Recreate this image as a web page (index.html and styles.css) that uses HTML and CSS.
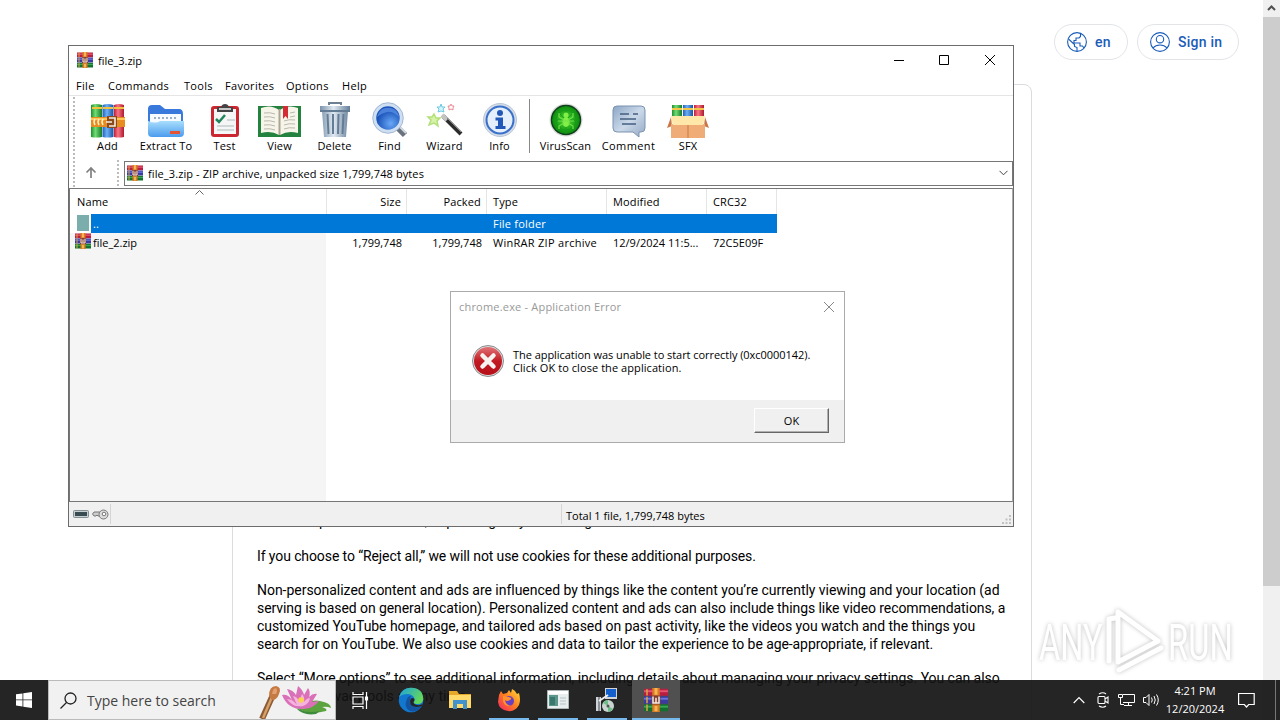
FILE: index.html
```html
<!DOCTYPE html>
<html lang="en">
<head>
    <meta charset="UTF-8">
    <meta name="viewport" content="width=device-width, initial-scale=1.0">
    <title>Desktop</title>
    <link rel="stylesheet" href="styles.css">
</head>
<body>
    <svg class="defs" width="0" height="0">
        <defs>
            <linearGradient id="gFolder" x1="0" y1="0" x2="0" y2="1"><stop offset="0" stop-color="#a9defc"/><stop offset="1" stop-color="#4a9bee"/></linearGradient>
            <linearGradient id="gSteel" x1="0" y1="0" x2="1" y2="0"><stop offset="0" stop-color="#7b94ab"/><stop offset=".45" stop-color="#dfe9f2"/><stop offset="1" stop-color="#647e98"/></linearGradient>
            <linearGradient id="gBubble" x1="0" y1="0" x2="1" y2="1"><stop offset="0" stop-color="#8ca6c5"/><stop offset=".5" stop-color="#cbd9ea"/><stop offset="1" stop-color="#93a9c4"/></linearGradient>
            <linearGradient id="gGreen" x1="0" y1="0" x2="1" y2="0"><stop offset="0" stop-color="#1d8f2d"/><stop offset=".4" stop-color="#72dc74"/><stop offset="1" stop-color="#157a27"/></linearGradient>
            <linearGradient id="gBlue" x1="0" y1="0" x2="1" y2="0"><stop offset="0" stop-color="#1f5fb8"/><stop offset=".4" stop-color="#6db0f5"/><stop offset="1" stop-color="#1a51a3"/></linearGradient>
            <linearGradient id="gRed" x1="0" y1="0" x2="1" y2="0"><stop offset="0" stop-color="#c11d38"/><stop offset=".4" stop-color="#f77683"/><stop offset="1" stop-color="#b01830"/></linearGradient>
            <radialGradient id="gLens" cx=".6" cy=".7"><stop offset="0" stop-color="#69a8f8"/><stop offset="1" stop-color="#1b53b8"/></radialGradient>
            <radialGradient id="gVirus"><stop offset="0" stop-color="#52dd35"/><stop offset="1" stop-color="#08880c"/></radialGradient>
            <linearGradient id="gError" x1="0" y1="0" x2="0" y2="1"><stop offset="0" stop-color="#e27478"/><stop offset=".5" stop-color="#c21a22"/><stop offset="1" stop-color="#b70f18"/></linearGradient>
            <linearGradient id="gEdge" x1="0" y1="0" x2="1" y2=".5"><stop offset="0" stop-color="#1ba0e2"/><stop offset="1" stop-color="#63d85b"/></linearGradient>
            <linearGradient id="gFox" x1="1" y1="0" x2="0" y2="1"><stop offset="0" stop-color="#ffe13a"/><stop offset=".5" stop-color="#ff7a20"/><stop offset="1" stop-color="#f0206a"/></linearGradient>
        </defs>
        <symbol id="rar" viewBox="0 0 16 16">
            <path fill="#b81d42" d="M0 .5h16v4.700H0z"/><path fill="#e4556f" d="M0 1.500h16v1.300H0z"/>
            <path fill="#3a3aa0" d="M0 5.500h16v5H0z"/><path fill="#6a74dc" d="M0 6.500h16v1.300H0z"/>
            <path fill="#12702f" d="M0 10.800h16v4.700H0z"/><path fill="#3aa653" d="M0 11.800h16v1.300H0z"/>
            <path fill="#d9a545" d="M1.500 .8h1v4.200h-1zM1.500 5.800h1v4.400h-1zM1.500 11h1v4.300h-1z"/>
            <path fill="#d97a26" d="M5.500 0h5v16h-5z"/><path fill="#f5b552" d="M7 0h2v4.500H7zM7 12h2v3.500H7z"/>
            <path fill="#833c2c" d="M5 5h6v6H5z"/>
            <path fill="none" stroke="#f4ece6" d="M6 5.700v4.300h4V5.700M8 6.500v3"/>
        </symbol>
    </svg>

    <main class="page">
        <header class="page-header">
            <a class="pill pill-lang">
                <svg width="20" height="20" viewBox="0 0 20 20" fill="none" stroke="currentColor" stroke-width="1.1"><circle cx="10" cy="10" r="9.4"/><path d="M1.500 7l6 5.500v2l2.500 1v4M13.500 1.500v3l-1.500 1.500H9v2.500H7V11h6v3h2.500l1.500 2"/></svg>
                <span>en</span>
            </a>
            <a class="pill pill-sign">
                <svg width="20" height="20" viewBox="0 0 20 20" fill="none" stroke="currentColor" stroke-width="1.1"><circle cx="10" cy="10" r="9.4"/><circle cx="10" cy="7.200" r="3.700"/><path d="M3 16c3.500-4 10.500-4 14 0"/></svg>
                <span>Sign in</span>
            </a>
        </header>
        <section class="consent">
            <ul><li>Show personalized ads, depending on your settings</li></ul>
            <p class="t2">If you choose to “Reject all,” we will not use cookies for these additional purposes.</p>
            <p><span class="t3">Non-personalized content and ads are influenced by things like the content you’re currently viewing and your location (ad</span><br>
            <span class="t4">serving is based on general location). Personalized content and ads can also include things like video recommendations, a</span><br>
            <span class="t5">customized YouTube homepage, and tailored ads based on past activity, like the videos you watch and the things you</span><br>
            <span class="t6">search for on YouTube. We also use cookies and data to tailor the experience to be age-appropriate, if relevant.</span></p>
            <p><span class="t7">Select “More options” to see additional information, including details about managing your privacy settings. You can also</span><br>
            visit g.co/privacytools at any time.</p>
        </section>
    </main>

    <div class="scrollbar">
        <svg class="scroll-up" width="17" height="17" viewBox="0 0 17 17"><path d="M5 10l3.500-3.500 3.500 3.500" fill="none" stroke="#505050" stroke-width="2"/></svg>
        <div class="thumb"></div>
    </div>

    <svg class="watermark" width="204" height="72" viewBox="0 0 204 72">
        <g fill="#fff" font-family="Roboto" font-size="50">
            <text transform="translate(4 54) scale(.65 1)">ANY</text>
            <text transform="translate(133 54) scale(.655 1)">RUN</text>
        </g>
        <path d="M74 55V13l6-1M83 6v50l40-21zM84 64l42-22" fill="none" stroke="#fff" stroke-width="5" stroke-linejoin="round" stroke-linecap="round"/>
    </svg>

    <div class="window">
        <div class="title-bar">
            <svg width="16" height="16"><use href="#rar"/></svg>
            <span class="title">file_3.zip</span>
            <div class="controls">
                <svg width="46" height="30" viewBox="0 0 46 30"><path d="M18 14.500h10" stroke="#000"/></svg>
                <svg width="46" height="30" viewBox="0 0 46 30"><path d="M17.500 9.500h9v9h-9z" fill="none" stroke="#000"/></svg>
                <svg width="45" height="30" viewBox="0 0 45 30"><path d="M17 9l10 10M27 9L17 19" stroke="#000"/></svg>
            </div>
        </div>
        <nav class="menu">
            <span class="m-file">File</span><span class="m-commands">Commands</span><span class="m-tools">Tools</span><span class="m-favorites">Favorites</span><span class="m-options">Options</span><span>Help</span>
        </nav>
        <div class="bars">
            <div class="grip"></div>
            <div class="bars-body">
                <div class="toolbar">
                    <div class="tool tool-add">
                        <svg width="34" height="34" viewBox="0 0 34 34"><path fill="url(#gGreen)" d="M0 1q5-2 11 0v32q-6 1-11 0z"/><path fill="url(#gBlue)" d="M11.500 1q5-2 11 0v32q-6 1-11 0z"/><path fill="url(#gRed)" d="M23 1q5-2 10 0v32q-5 1-10 0z"/><path fill="#f3c23f" d="M1 3h10v2H1zM12 3h10v2H12zM23 3h10v2H23z"/><path fill="#e78c20" d="M0 13h34v10H0z"/><path fill="#ffc758" d="M0 14h34v2H0z"/><path d="M4 15q-2 3 0 6M8 15q-2 3 0 6M12 15q-2 3 0 6" stroke="#fff0c5" stroke-width="1.500" fill="none"/><path fill="#8d4b1c" d="M16 12h10v12H16z"/><path fill="none" stroke="#f6ede2" stroke-width="1.600" d="M18 14h6v8h-6M15 18h6"/></svg>
                        <span>Add</span>
                    </div>
                    <div class="tool tool-wide">
                        <svg width="38" height="34" viewBox="0 0 38 34"><path fill="#3979dc" d="M1 5q0-4 4-4h8l5 4h14q4 0 4 5v18H1z"/><path fill="#f7faff" d="M3 10h31v12H3z"/><path d="M7 14h24" stroke="#9cafc7" stroke-width="2" stroke-dasharray="2 2"/><path fill="url(#gFolder)" d="M1 17q8 3 12 0h24v12q0 4-4 4H5q-4 0-4-4z"/><path fill="#e55234" d="M23 27h10v3H23z"/></svg>
                        <span>Extract To</span>
                    </div>
                    <div class="tool">
                        <svg width="30" height="34" viewBox="0 0 30 34"><rect x="1" y="2" width="28" height="31" rx="3" fill="#cc2630"/><path fill="#f6f6f6" d="M4 5h22v25H4z"/><path fill="#444" d="M7 3h4q1-3 4-3t4 3h4v5H7z"/><path fill="#c7c7c7" d="M9 4h12v2H9z"/><path d="M6 15l3 3 6-7" fill="none" stroke="#20865b" stroke-width="2.500"/><path d="M17 16h8M7 22h17M7 26h17" stroke="#abb"/></svg>
                        <span>Test</span>
                    </div>
                    <div class="tool">
                        <svg width="43" height="34" viewBox="0 0 43 34"><path fill="#23823e" d="M0 2h43v31H0z"/><path fill="#f7f4e9" d="M3 4q10-4 18 2v25q-8-5-18-2zM40 4q-10-4-18 2v25q8-5 18-2z"/><path d="M21.500 5v26" stroke="#aaa58f" stroke-width="2"/><path d="M6 9q6-1 11 1M6 13q6-1 11 1M6 17q6-1 11 1M6 21q6-1 11 1M6 25q6-1 11 1M26 17q5-2 11-1M26 21q5-2 11-1M26 25q5-2 11-1M32 9l5-1M32 13l5-1" fill="none" stroke="#b8b9ad"/><path fill="#d42c35" d="M25 2h5v13l-2.500-3-2.500 3z"/></svg>
                        <span>View</span>
                    </div>
                    <div class="tool">
                        <svg width="34" height="36" viewBox="0 0 34 36"><path fill="none" stroke="#6d8193" stroke-width="2" d="M11 3V1h12v2"/><path fill="url(#gSteel)" d="M2 4h30v5H2zM4 9h26l-2 26H6z"/><path d="M2 9h30M9.500 12l1 20M15 12v20M20.500 12l-.5 20M25.500 12l-1 20" stroke="#647d95" stroke-width="2"/></svg>
                        <span>Delete</span>
                    </div>
                    <div class="tool">
                        <svg width="38" height="36" viewBox="0 0 38 36"><path d="M25 24l9 9" stroke="#69727d" stroke-width="6"/><path d="M27 23l8 8" stroke="#d5dbe2" stroke-width="2"/><circle cx="17" cy="16" r="13.500" fill="url(#gLens)" stroke="#cfdff2" stroke-width="3.500"/><circle cx="17" cy="16" r="15.300" fill="none" stroke="#8ba0c4" stroke-width=".7"/><path fill="#5f95ea" opacity=".7" d="M6 15Q9 4 20 6q7 2 8 9-6-6-12-5-5 1-10 5z"/></svg>
                        <span>Find</span>
                    </div>
                    <div class="tool">
                        <svg width="38" height="36" viewBox="0 0 38 36"><path d="M17 14l18 18" stroke="#2c2c2c" stroke-width="4"/><path d="M16 13l5 5" stroke="#c4c4c4" stroke-width="4"/><path d="M21 16l14 14" stroke="#888"/><path fill="#d7f2aa" stroke="#b4e07a" stroke-width="1.500" d="M8 12l2 4 4 0-3 3 1 5-4-3-5 2 2-5-3-3 4 0z"/><path fill="#d6f3fa" stroke="#6dcbe5" d="M15 2l1 3 3 0-2 2 1 3-3-1-3 1 1-3-2-2 3 0z"/><path fill="#fff" stroke="#ee8a94" d="M25 2l1 2 2 0-1 2 0 2-2-1-2 1 0-2-1-2 2 0z"/></svg>
                        <span>Wizard</span>
                    </div>
                    <div class="tool">
                        <svg width="36" height="36" viewBox="0 0 36 36"><circle cx="18" cy="18" r="16.500" fill="#d4dce7" stroke="#bac7d9"/><circle cx="18" cy="18" r="13.500" fill="#e5effc" stroke="#3970c9" stroke-width="2"/><circle cx="18" cy="11" r="3" fill="#2157b8"/><path fill="#2157b8" d="M13.500 15.500H21V24h2.500v3h-10v-3H16v-5.500h-2.500z"/></svg>
                        <span>Info</span>
                    </div>
                    <div class="tool-sep"></div>
                    <div class="tool tool-virus">
                        <svg width="36" height="36" viewBox="0 0 36 36"><circle cx="18" cy="18" r="16.500" fill="#d7dcd5"/><circle cx="18" cy="18" r="14.500" fill="url(#gVirus)" stroke="#123e20" stroke-width="1.500"/><path d="M4 18h28M18 4v28M8 8l20 20M28 8L8 28" stroke="#159b18" stroke-width=".8"/><circle cx="18" cy="18" r="10" fill="none" stroke="#159b18"/><ellipse cx="18" cy="20" rx="3.500" ry="5" fill="#82ef48"/><circle cx="18" cy="13" r="2.500" fill="#82ef48"/><path d="M11 11v4l5 3M25 11v4l-5 3M10 19h16M11 27v-3l5-3M25 27v-3l-5-3" fill="none" stroke="#73e048" stroke-width="1.200"/></svg>
                        <span>VirusScan</span>
                    </div>
                    <div class="tool tool-wide tool-comment">
                        <svg width="34" height="34" viewBox="0 0 34 34"><path fill="url(#gBubble)" stroke="#7c93b1" d="M5 2h24q4 0 4 4v18q0 4-4 4h-2v5l-6-5H5q-4 0-4-4V6q0-4 4-4z"/><path d="M8 10h9M21 10h5M8 15h16M10 20h14" stroke="#445e80" stroke-width="1.700"/></svg>
                        <span>Comment</span>
                    </div>
                    <div class="tool tool-sfx">
                        <svg width="42" height="34" viewBox="0 0 42 34"><path fill="url(#gGreen)" d="M5 1h10v14H5z"/><path fill="url(#gBlue)" d="M16 1h10v14H16z"/><path fill="url(#gRed)" d="M27 1h10v14H27z"/><path fill="#f3c548" d="M5 4h10v2H5zM16 4h10v2H16zM27 4h10v2H27z"/><path fill="#c87848" d="M4 13L0 24l5-2zM38 13l4 11-5-2z"/><path fill="#f0ac77" d="M4 20h34v14H4z"/><path fill="#ffe6a9" d="M4 12h34l-2 9H6z"/><path d="M21 21v13" stroke="#c57b46"/></svg>
                        <span>SFX</span>
                    </div>
                </div>
                <div class="address">
                    <svg class="up" width="12" height="13" viewBox="0 0 12 13"><path d="M6 12V2M1.500 6.500L6 2l4.500 4.500" fill="none" stroke="#808080" stroke-width="1.700"/></svg>
                    <div class="grip grip-small"></div>
                    <div class="combo">
                        <svg width="16" height="16"><use href="#rar"/></svg>
                        <span>file_3.zip - ZIP archive, unpacked size 1,799,748 bytes</span>
                        <svg class="drop" width="9" height="6" viewBox="0 0 9 6"><path d="M.5 .8l4 4 4-4" fill="none" stroke="#444"/></svg>
                    </div>
                </div>
            </div>
        </div>
        <div class="list">
            <svg class="sort" width="9" height="5" viewBox="0 0 9 5"><path d="M.5 4.500l4-4 4 4" fill="none" stroke="#666"/></svg>
            <div class="row head">
                <span>Name</span><span class="num">Size</span><span class="num">Packed</span><span>Type</span><span>Modified</span><span>CRC32</span>
            </div>
            <div class="row selected">
                <span class="name"><i class="folder"></i><b>..</b></span><span></span><span></span><span>File folder</span><span></span><span></span>
            </div>
            <div class="row">
                <span class="name"><svg width="16" height="16"><use href="#rar"/></svg>file_2.zip</span><span class="num">1,799,748</span><span class="num">1,799,748</span><span class="type">WinRAR ZIP archive</span><span>12/9/2024 11:5...</span><span class="crc">72C5E09F</span>
            </div>
            <div class="shade"></div>
        </div>
        <footer class="status">
            <div class="status-icons">
                <svg width="16" height="8" viewBox="0 0 16 8"><rect x=".5" y=".5" width="15" height="7" rx="1" fill="#c5ced0" stroke="#858e91"/><path fill="#374b50" d="M2 2h12v4H2z"/></svg>
                <svg width="17" height="11" viewBox="0 0 17 11"><path fill="#ccc" stroke="#777" d="M9 3H2L.5 5 2 7h2l1-1 1 1h3z"/><circle cx="11.500" cy="5.500" r="4.500" fill="#ddd" stroke="#777"/><circle cx="12" cy="5" r="1.800" fill="#fff" stroke="#777"/></svg>
            </div>
            <div class="status-space"></div>
            <span class="total">Total 1 file, 1,799,748 bytes</span>
            <svg class="resize" width="10" height="10" viewBox="0 0 10 10"><path fill="#c0c0c0" d="M7 0h2v2H7zM7 3.500h2v2H7zM7 7h2v2H7zM3.500 3.500h2v2h-2zM3.500 7h2v2h-2zM0 7h2v2H0z"/></svg>
        </footer>
    </div>

    <div class="dialog">
        <div class="dialog-title">
            <span>chrome.exe - Application Error</span>
            <svg width="12" height="12" viewBox="0 0 12 12"><path d="M1 1l10 10M11 1L1 11" stroke="#888"/></svg>
        </div>
        <div class="dialog-body">
            <svg width="32" height="32" viewBox="0 0 32 32"><circle cx="16" cy="16" r="15.500" fill="#ddd" stroke="#8c8c8c"/><circle cx="16" cy="16" r="14" fill="url(#gError)"/><path d="M10.500 10.500l11 11M21.500 10.500l-11 11" stroke="#f6f2f0" stroke-width="4.500" stroke-linecap="round"/></svg>
            <p><span class="error-line">The application was unable to start correctly (0xc0000142).</span><br><span class="error-hint">Click OK to close the application.</span></p>
        </div>
        <div class="dialog-footer"><button>OK</button></div>
    </div>

    <footer class="taskbar">
        <div class="start">
            <svg width="16" height="16" viewBox="0 0 16 16" fill="#fff"><path d="M0 2.300l6.500-.9v6.100H0zM7.300 1.300L16 0v7.500H7.300zM0 8.300h6.500v6.200L0 13.600zM7.300 8.300H16V16l-8.700-1.300z"/></svg>
        </div>
        <div class="search">
            <svg width="17" height="17" viewBox="0 0 17 17" fill="none" stroke="#222" stroke-width="1.300"><circle cx="10.500" cy="6.500" r="5.500"/><path d="M6.500 10.500L.5 16.500"/></svg>
            <span>Type here to search</span>
            <svg class="lotus" width="74" height="34" viewBox="0 0 74 34"><path d="M4 34L14 12" stroke="#8b5a35" stroke-width="6"/><path d="M5 33L14 12" stroke="#d6a066" stroke-width="2.500"/><path fill="#c67a43" d="M11 11q0-10 7-10 6 1 3 8-2 6-7 6z"/><path fill="#e3a070" d="M14 9q1-6 4-6 2 2 0 6z"/><path fill="#5ba33f" d="M38 22q14-8 24-6 11 2 11 7-4-2-9-1 6 2 4 4-14 4-26-1z"/><path fill="#3f8b3c" d="M38 23q12 6 24 3l-4 3q-13 2-20-6z"/><path fill="#d970b8" d="M24 10q6-1 10 5l-5-11q6 1 9 6l2-9q5 4 6 9l4-7q3 4 1 9 4-4 8-3l-5 8q5-1 7-1-5 7-15 8-16 1-22-14z"/><path fill="#f5b3dd" d="M29 14q6 0 10 6l-4-9q5 1 6 6l3-8q3 3 2 8 3-4 6-4-1 6-7 8-10 2-16-7z"/><circle cx="43" cy="15" r="2.800" fill="#f8d54c"/></svg>
        </div>
        <div class="task task-view">
            <svg width="17" height="17" viewBox="0 0 17 17" fill="none" stroke="#fff" stroke-width="1.200"><path d="M1 0v2.500h10V0M1 17v-2.500h10V17M1 5h10v7H1zM14.500 0v17"/><path fill="#fff" d="M13.500 5h2v3h-2z"/></svg>
        </div>
        <div class="task">
            <svg width="26" height="26" viewBox="0 0 26 26"><circle cx="13" cy="13" r="12.300" fill="#1277cf"/><path fill="url(#gEdge)" d="M1 10Q4 .7 13 .7 25 1 25.300 12q-.5 5-5.500 5-4 0-4.500-2 2-1 1-4-2-4-7-4T1 10z"/><path fill="#1353a0" d="M9 12q1-3 4-3-4 9 4 11 4 1 7-1-5 7-12 5Q5 20 9 12z"/><path fill="#242424" d="M14 11q3 0 2.300 2.500-2 2.500 1 4Q21 19 24.700 17l-1 2.300Q12 22 12 14q.5-3 2-3z"/></svg>
        </div>
        <div class="task">
            <svg width="22" height="20" viewBox="0 0 22 20"><path fill="#e5a829" d="M0 1h8l2 3h12v14H0z"/><path fill="#ffda6b" d="M0 5h22v13H0z"/><path fill="#4292ce" d="M4 10h14v9h-4v-5H8v5H4z"/></svg>
        </div>
        <div class="task open">
            <svg width="24" height="24" viewBox="0 0 24 24"><path fill="url(#gFox)" d="M2 7l2-4 2 3 4-1 2-3 2 3 1-4q3 1 5 5l2-1q2 7 0 12-4 7-11 6Q2 22 1 14z"/><circle cx="12" cy="13" r="5" fill="#6841c0"/><path fill="#ff922d" d="M6 8l6 1q4 1 1 3-3 2-5 0 1 6 6 5-6 3-8-4z"/></svg>
        </div>
        <div class="task open">
            <svg width="22" height="20" viewBox="0 0 22 20"><path fill="#e8eeee" stroke="#afb8b8" d="M.5 .5h21v18H.5z"/><path fill="#fff" d="M1 1h20v3H1z"/><path fill="#5c958c" d="M2 5h9v11H2z"/><path fill="#38786d" d="M3 7h5v8H3z"/><path d="M13 8h6M13 11h6M13 14h6" stroke="#b6c3c3"/></svg>
        </div>
        <div class="task open">
            <svg width="24" height="24" viewBox="0 0 24 24"><path fill="#d2d5d8" d="M1 9h5v14H1z"/><path fill="#8a9098" d="M3 9h2v14H3z"/><path fill="#d2d5d8" d="M10 0h12v11H10z"/><path fill="#155fcb" d="M11 1h10v8H11z"/><path d="M4 13l9-6" stroke="#eee" stroke-width="2"/><circle cx="13" cy="18" r="6" fill="#c9d6cf"/><path fill="#6fbd8a" d="M13 18l-5-3q2-3 5-3zM13 18l5 3q-2 3-5 3z"/><circle cx="13" cy="18" r="1.500" fill="#555"/></svg>
        </div>
        <div class="task active">
            <svg width="24" height="24"><use href="#rar"/></svg>
        </div>
        <div class="tray">
            <svg width="12" height="8" viewBox="0 0 12 8"><path d="M.7 7L6 1.500 11.300 7" fill="none" stroke="#fff" stroke-width="1.200"/></svg>
            <svg class="meet" width="12" height="16" viewBox="0 0 12 16" fill="none" stroke="#fff" stroke-width="1.100"><rect x="1" y="4.500" width="7" height="7" rx="1"/><path d="M8 7l3-2v6L8 9M2 2q4-2.500 7 0M2 14q4 2.500 7 0"/></svg>
            <svg class="network" width="17" height="14" viewBox="0 0 17 14" fill="none" stroke="#fff"><path d="M5 1.500h11.500v8H5M10.500 9.500v3M6 12.500h8M.5 1.500h4v3h-4zM2.500 4.500v7h3.500"/></svg>
            <svg class="volume" width="17" height="14" viewBox="0 0 17 14" fill="none" stroke="#fff"><path d="M.5 4.500h2.500L6 1.500v11L3 9.500H.5zM8.500 4.500q1.500 2.500 0 5M11 3q2.500 4 0 8M13.500 1.500q3.500 5.500 0 11"/></svg>
            <div class="clock"><span class="time">4:21 PM</span><span>12/20/2024</span></div>
            <svg width="17" height="16" viewBox="0 0 17 16" fill="none" stroke="#fff" stroke-width="1.200"><path d="M.6 1.500h15.600v11h-5.500L8.500 15l-2.200-2.500H.6z"/></svg>
        </div>
        <div class="peek"></div>
    </footer>
</body>
</html>
```
FILE: styles.css
```css
* {
    box-sizing: border-box;
}

body {
    margin: 0;
    width: 1280px;
    height: 720px;
    overflow: hidden;
    position: relative;
    display: flex;
    background-color: white;
    font-family: "Open Sans", "Noto Sans", sans-serif;
    font-size: 11px;
    color: #000;
}

svg {
    display: block;
    flex: none;
}

p {
    margin: 0;
}

.defs {
    position: absolute;
}

/* web page behind the windows */
.page {
    width: 1263px;
    height: 720px;
    overflow: hidden;
    font-family: Roboto, sans-serif;
}

.page-header {
    height: 84px;
    padding: 24px 24px 0 0;
    display: flex;
    justify-content: flex-end;
    gap: 9px;
}

.pill {
    height: 36px;
    border: 1px solid #e2e4e8;
    border-radius: 18px;
    display: flex;
    align-items: center;
    padding-left: 12px;
    gap: 8px;
    color: #1a5cb8;
    font-size: 14px;
    font-weight: 500;
    letter-spacing: 0.25px;
}

.pill-lang {
    width: 74px;
}

.pill-sign {
    width: 102px;
}

.consent {
    width: 800px;
    height: 700px;
    margin-left: 232px;
    border: 1px solid #dadce0;
    border-radius: 8px;
    padding: 427px 24px 0;
    font-size: 14px;
    line-height: 18px;
    color: #000;
    white-space: nowrap;
}

.consent ul {
    margin: 0 0 17px;
    padding-left: 24px;
}

.consent p {
    margin-bottom: 16px;
}

.t2 {
    letter-spacing: -0.1px;
}

.t3 {
    letter-spacing: -0.03px;
}

.t4 {
    letter-spacing: -0.08px;
}

.t5 {
    letter-spacing: -0.05px;
}

.t6 {
    letter-spacing: -0.08px;
}

.t7 {
    letter-spacing: -0.04px;
}

.scrollbar {
    width: 17px;
    height: 720px;
    background-color: #f0f0f0;
}

.thumb {
    height: 569px;
    background-color: #cdcdcd;
}

.watermark {
    position: absolute;
    left: 1035px;
    top: 606px;
    filter: drop-shadow(0 0 2px rgba(0, 0, 0, 0.25));
}

/* archive window */
.window {
    position: absolute;
    left: 68px;
    top: 45px;
    width: 946px;
    height: 482px;
    border: 1px solid #6c6c6c;
    background-color: white;
    display: flex;
    flex-direction: column;
    white-space: nowrap;
}

.title-bar {
    height: 30px;
    display: flex;
    align-items: center;
    padding-left: 8px;
    gap: 5px;
}

.title-bar > svg,
.title {
    margin-bottom: 2px;
}

.controls {
    margin-left: auto;
    display: flex;
}

.menu {
    height: 20px;
    display: flex;
    align-items: center;
    padding-left: 7px;
    border-bottom: 1px solid #e5e5e5;
    letter-spacing: 0.3px;
}

.m-file {
    width: 32px;
}

.m-commands {
    width: 76px;
}

.m-tools {
    width: 41px;
}

.m-favorites {
    width: 61px;
}

.m-options {
    width: 56px;
}

.bars {
    height: 92px;
    display: flex;
    padding: 1px 0 0 4px;
}

.grip {
    width: 2px;
    background: repeating-linear-gradient(#bbb 0 2px, #fff 2px 4px);
}

.bars-body {
    flex: 1;
}

.toolbar {
    height: 63px;
    display: flex;
    padding-left: 5px;
}

.tool {
    width: 55px;
    height: 57px;
    display: flex;
    flex-direction: column;
    align-items: center;
    justify-content: flex-end;
}

.tool svg {
    margin-bottom: 0;
}

.tool span {
    line-height: 16px;
    letter-spacing: 0.15px;
}

.tool-add {
    width: 55px;
}

.tool-wide {
    width: 62px;
}

.tool-comment {
    width: 61px;
}

.tool-comment span {
    letter-spacing: 0.4px;
}

.tool-virus {
    width: 65px;
}

.tool-sfx {
    width: 58px;
}

.tool-sep {
    width: 1px;
    height: 54px;
    margin: 2px 3px 0 2px;
    background-color: #888;
}

.address {
    height: 26px;
    display: flex;
    align-items: center;
}

.up {
    margin-left: 10px;
    margin-bottom: 2px;
}

.grip-small {
    height: 26px;
    margin-left: 20px;
}

.combo {
    width: 889px;
    height: 25px;
    margin-left: 5px;
    border: 1px solid #777;
    display: flex;
    align-items: center;
    padding: 0 4px 0 2px;
    gap: 5px;
    letter-spacing: 0.1px;
}

.drop {
    margin-left: auto;
}

.list {
    position: relative;
    height: 314px;
    border: 1px solid #777;
    border-right-color: #aaa;
    display: flex;
    flex-direction: column;
}

.sort {
    position: absolute;
    left: 125px;
    top: 1px;
}

.row {
    width: 707px;
    height: 19px;
    display: grid;
    grid-template-columns: 257px 80px 80px 120px 100px 70px;
    align-items: center;
    line-height: 19px;
}

.row > span {
    padding-left: 6px;
}

.row > .num {
    padding: 0 5px 0 0;
    text-align: right;
}

.row > .name {
    display: flex;
    padding-left: 5px;
    gap: 2px;
}

.row > .type {
    letter-spacing: 0.28px;
}

.head {
    height: 25px;
    line-height: 25px;
    letter-spacing: 0.15px;
}

.head > span {
    height: 25px;
    border-right: 1px solid #e5e5e5;
}

.head > span:first-child {
    padding-left: 7px;
}

.selected {
    background: linear-gradient(#0078d7, #0078d7) 21px 0 no-repeat;
    color: white;
    letter-spacing: 0.2px;
}

.selected b {
    font-weight: normal;
}

.folder {
    width: 12px;
    height: 16px;
    margin: 1px 2px 0;
    background-color: #7aadac;
}

.shade {
    width: 256px;
    flex: 1;
    background-color: #f5f5f5;
}

.row:not(.head):not(.selected) > .name {
    background-color: #f5f5f5;
    margin-right: 1px;
}

.status {
    flex: 1;
    display: flex;
    align-items: center;
    background-color: #f0f0f0;
    position: relative;
}

.total {
    padding-top: 2px;
}

.status-icons {
    width: 42px;
    height: 20px;
    padding-left: 4px;
    display: flex;
    align-items: center;
    gap: 3px;
    border-right: 1px solid #d5d5d5;
}

.status-space {
    width: 451px;
    height: 20px;
    margin-right: 4px;
    border-right: 1px solid #d5d5d5;
}

.resize {
    position: absolute;
    right: 1px;
    bottom: 1px;
}

/* error message */
.dialog {
    position: absolute;
    left: 450px;
    top: 291px;
    width: 395px;
    height: 152px;
    border: 1px solid #aaa;
    background-color: white;
    white-space: nowrap;
}

.dialog-title {
    height: 29px;
    padding: 0 9px 0 8px;
    display: flex;
    align-items: center;
    justify-content: space-between;
    color: #999;
    letter-spacing: 0.2px;
}

.dialog-body {
    height: 79px;
    padding: 24px 0 0 21px;
    display: flex;
    gap: 9px;
}

.dialog-body p {
    line-height: 13px;
    padding-top: 3px;
}

.error-line {
    letter-spacing: -0.05px;
}

.error-hint {
    letter-spacing: 0.07px;
}

.dialog-footer {
    height: 42px;
    background-color: #f0f0f0;
    display: flex;
    justify-content: flex-end;
    padding: 8px 15px 0 0;
}

button {
    width: 75px;
    height: 25px;
    font: inherit;
    background-color: #f0f0f0;
    border: 1px solid;
    border-color: #fff #666 #666 #fff;
    box-shadow: inset -1px -1px #b0b0b0;
    padding: 0;
}

.taskbar {
    position: absolute;
    left: 0;
    top: 680px;
    width: 1280px;
    height: 40px;
    display: flex;
    background-color: rgba(18, 18, 18, 0.92);
    color: white;
}

.start {
    width: 48px;
    display: flex;
    align-items: center;
    justify-content: center;
}

.search {
    width: 288px;
    border: 1px solid #bbb;
    background-color: #f1f1f1;
    display: flex;
    align-items: center;
    padding-left: 11px;
    color: #444;
    font-size: 14px;
}

.search span {
    margin-left: 10px;
}

.lotus {
    margin: 4px 3px 0 auto;
}

.task {
    width: 49px;
    display: flex;
    align-items: center;
    justify-content: center;
    position: relative;
}

.task-view {
    width: 50px;
    padding-right: 2px;
}

.open::after,
.active::after {
    content: "";
    position: absolute;
    left: 5px;
    right: 4px;
    bottom: 0;
    height: 2px;
    background-color: #76b9ed;
}

.active {
    width: 48px;
    margin-left: 1px;
    background-color: #505050;
}

.active::after {
    left: 0;
    right: 0;
}

.tray {
    margin-left: auto;
    display: flex;
    align-items: center;
}

.meet {
    margin-left: 12px;
}

.network {
    margin-left: 9px;
}

.volume {
    margin-left: 8px;
}

.clock {
    width: 60px;
    display: flex;
    flex-direction: column;
    align-items: center;
    line-height: 18px;
    margin: 0 13px 0 5px;
}

.peek {
    width: 5px;
    margin-left: 20px;
    border-left: 1px solid #777;
}
```
